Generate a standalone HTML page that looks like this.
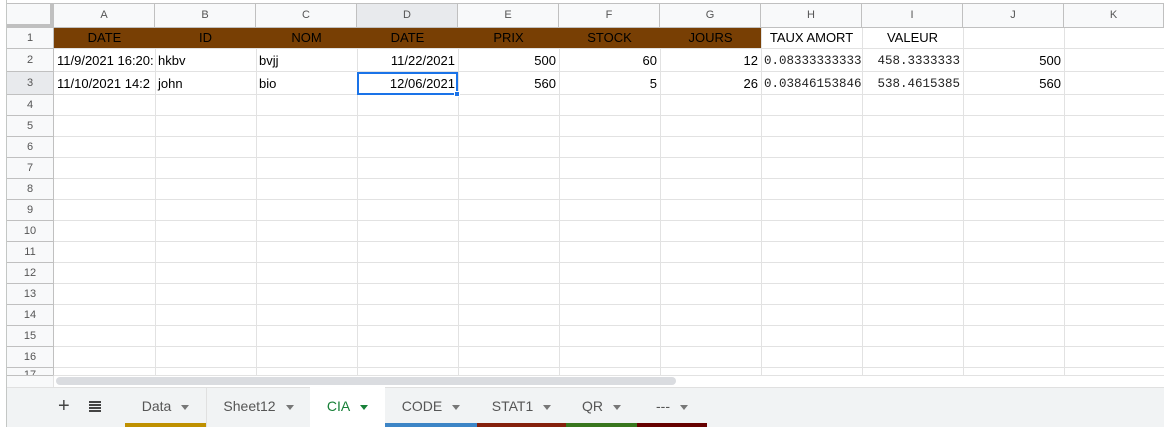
<!DOCTYPE html>
<html><head><style>
*{margin:0;padding:0;box-sizing:border-box}
body{width:1164px;height:427px;overflow:hidden;background:#fff;font-family:"Liberation Sans",Arial,sans-serif;position:relative}
.abs{position:absolute}
.ch{position:absolute;top:4px;height:24px;background:#f8f9fa;border-right:1px solid #c0c0c0;border-bottom:1px solid #c0c0c0;font-size:11px;color:#555;text-align:center;line-height:23px}
.rh{position:absolute;left:7px;width:47px;background:#f8f9fa;border-bottom:1px solid #c0c0c0;border-right:1px solid #c0c0c0;font-size:11px;color:#555;text-align:center}
.vl{position:absolute;top:28px;height:348px;width:1px;background:#e2e2e2}
.hl{position:absolute;left:54px;width:1110px;height:1px;background:#e2e2e2}
.c{position:absolute;font-size:13px;color:#000;white-space:nowrap;overflow:hidden;padding:0 3px}
.r{text-align:right}
.m{font-family:"Liberation Mono",monospace;font-size:12.5px;color:#222}
.tab{position:absolute;top:387px;height:40px;font-size:14px;color:#555;line-height:38px;text-align:center}
.tab span.a{display:inline-block;width:0;height:0;border-left:4px solid transparent;border-right:4px solid transparent;border-top:5px solid #777;margin-left:10px;vertical-align:middle}
.bar{position:absolute;bottom:0;left:0;right:0;height:4px}
</style></head><body>
<div class="abs" style="left:0;top:0;width:1164px;height:4px;background:#fff;border-bottom:1px solid #c0c0c0"></div>
<div class="abs" style="left:7px;top:4px;width:47px;height:24px;background:#f8f9fa;border-right:4px solid #c0c0c0;border-bottom:4px solid #c0c0c0"></div>
<div class="ch" style="left:54px;width:101px">A</div>
<div class="ch" style="left:155px;width:101px">B</div>
<div class="ch" style="left:256px;width:101px">C</div>
<div class="ch" style="left:357px;width:101px;background:#e8eaed">D</div>
<div class="ch" style="left:458px;width:101px">E</div>
<div class="ch" style="left:559px;width:101px">F</div>
<div class="ch" style="left:660px;width:101px">G</div>
<div class="ch" style="left:761px;width:101px">H</div>
<div class="ch" style="left:862px;width:101px">I</div>
<div class="ch" style="left:963px;width:101px">J</div>
<div class="ch" style="left:1064px;width:100px">K</div>
<div class="vl" style="left:155px"></div><div class="vl" style="left:256px"></div><div class="vl" style="left:357px"></div><div class="vl" style="left:458px"></div><div class="vl" style="left:559px"></div><div class="vl" style="left:660px"></div><div class="vl" style="left:761px"></div><div class="vl" style="left:862px"></div><div class="vl" style="left:963px"></div><div class="vl" style="left:1064px"></div>
<div class="abs" style="left:54px;top:28px;width:707px;height:20px;background:#783f04"></div>
<div class="rh" style="top:28px;height:21px;line-height:20px">1</div>
<div class="hl" style="top:48px"></div>
<div class="rh" style="top:49px;height:23px;line-height:22px">2</div>
<div class="hl" style="top:71px"></div>
<div class="rh" style="top:72px;height:23px;line-height:22px;background:#e8eaed">3</div>
<div class="hl" style="top:94px"></div>
<div class="rh" style="top:95px;height:21px;line-height:20px">4</div><div class="hl" style="top:115px"></div>
<div class="rh" style="top:116px;height:21px;line-height:20px">5</div><div class="hl" style="top:136px"></div>
<div class="rh" style="top:137px;height:21px;line-height:20px">6</div><div class="hl" style="top:157px"></div>
<div class="rh" style="top:158px;height:21px;line-height:20px">7</div><div class="hl" style="top:178px"></div>
<div class="rh" style="top:179px;height:21px;line-height:20px">8</div><div class="hl" style="top:199px"></div>
<div class="rh" style="top:200px;height:21px;line-height:20px">9</div><div class="hl" style="top:220px"></div>
<div class="rh" style="top:221px;height:21px;line-height:20px">10</div><div class="hl" style="top:241px"></div>
<div class="rh" style="top:242px;height:21px;line-height:20px">11</div><div class="hl" style="top:262px"></div>
<div class="rh" style="top:263px;height:21px;line-height:20px">12</div><div class="hl" style="top:283px"></div>
<div class="rh" style="top:284px;height:21px;line-height:20px">13</div><div class="hl" style="top:304px"></div>
<div class="rh" style="top:305px;height:21px;line-height:20px">14</div><div class="hl" style="top:325px"></div>
<div class="rh" style="top:326px;height:21px;line-height:20px">15</div><div class="hl" style="top:346px"></div>
<div class="rh" style="top:347px;height:21px;line-height:20px">16</div><div class="hl" style="top:367px"></div>
<div class="rh" style="top:368px;height:7px;line-height:14px;overflow:hidden;border-bottom:none">17</div>
<div class="c" style="left:54px;top:30px;width:101px;text-align:center">DATE</div>
<div class="c" style="left:155px;top:30px;width:101px;text-align:center">ID</div>
<div class="c" style="left:256px;top:30px;width:101px;text-align:center">NOM</div>
<div class="c" style="left:357px;top:30px;width:101px;text-align:center">DATE</div>
<div class="c" style="left:458px;top:30px;width:101px;text-align:center">PRIX</div>
<div class="c" style="left:559px;top:30px;width:101px;text-align:center">STOCK</div>
<div class="c" style="left:660px;top:30px;width:101px;text-align:center">JOURS</div>
<div class="c" style="left:761px;top:30px;width:101px;text-align:center">TAUX AMORT</div>
<div class="c" style="left:862px;top:30px;width:101px;text-align:center">VALEUR</div>
<div class="c" style="left:54px;top:53px;width:101px">11/9/2021 16:20:</div>
<div class="c" style="left:155px;top:53px;width:101px">hkbv</div>
<div class="c" style="left:256px;top:53px;width:101px">bvjj</div>
<div class="c r" style="left:357px;top:53px;width:101px">11/22/2021</div>
<div class="c r" style="left:458px;top:53px;width:101px">500</div>
<div class="c r" style="left:559px;top:53px;width:101px">60</div>
<div class="c r" style="left:660px;top:53px;width:101px">12</div>
<div class="c m" style="left:761px;top:54px;width:101px">0.08333333333</div>
<div class="c m r" style="left:862px;top:54px;width:101px">458.3333333</div>
<div class="c r" style="left:963px;top:53px;width:101px">500</div>
<div class="c" style="left:54px;top:76px;width:101px">11/10/2021 14:2</div>
<div class="c" style="left:155px;top:76px;width:101px">john</div>
<div class="c" style="left:256px;top:76px;width:101px">bio</div>
<div class="c r" style="left:357px;top:76px;width:101px">12/06/2021</div>
<div class="c r" style="left:458px;top:76px;width:101px">560</div>
<div class="c r" style="left:559px;top:76px;width:101px">5</div>
<div class="c r" style="left:660px;top:76px;width:101px">26</div>
<div class="c m" style="left:761px;top:77px;width:101px">0.03846153846</div>
<div class="c m r" style="left:862px;top:77px;width:101px">538.4615385</div>
<div class="c r" style="left:963px;top:76px;width:101px">560</div>
<div class="abs" style="left:357px;top:72px;width:101px;height:23px;border:2px solid #1a73e8"></div>
<div class="abs" style="left:454px;top:91px;width:6px;height:6px;background:#1a73e8;border:1px solid #fff"></div>
<div class="abs" style="left:0;top:375px;width:1164px;height:12px;background:#fff;border-top:1px solid #e2e2e2"></div>
<div class="abs" style="left:7px;top:375px;width:47px;height:12px;background:#f8f9fa;border-right:1px solid #e2e2e2;border-top:1px solid #c0c0c0"></div>
<div class="abs" style="left:56px;top:377px;width:620px;height:8px;background:#dadce0;border-radius:4px"></div>
<div class="abs" style="left:0;top:387px;width:1164px;height:40px;background:#f1f3f4;border-top:1px solid #e0e0e0"></div>
<div class="abs" style="left:0;top:0;width:7px;height:427px;border-right:1px solid #c4c7c5;background:#fff"></div>
<div class="abs" style="left:58px;top:395px;font-size:20px;color:#444">+</div>
<div class="abs" style="left:89px;top:401px;width:12px;height:12px;background:repeating-linear-gradient(#444 0 2px,transparent 2px 3px)"></div>
<div class="tab" style="left:125px;width:81px">Data<span class="a"></span><div class="bar" style="background:#bf9000"></div></div>
<div class="tab" style="left:206px;width:104px;border-left:1px solid #e0e0e0">Sheet12<span class="a"></span></div>
<div class="tab" style="left:310px;width:75px;background:#fff;color:#188038">CIA<span class="a" style="border-top-color:#188038"></span></div>
<div class="tab" style="left:385px;width:92px">CODE<span class="a"></span><div class="bar" style="background:#3d85c6"></div></div>
<div class="tab" style="left:477px;width:89px">STAT1<span class="a"></span><div class="bar" style="background:#85200c"></div></div>
<div class="tab" style="left:566px;width:71px">QR<span class="a"></span><div class="bar" style="background:#38761d"></div></div>
<div class="tab" style="left:637px;width:70px">---<span class="a"></span><div class="bar" style="background:#660000"></div></div>
</body></html>
